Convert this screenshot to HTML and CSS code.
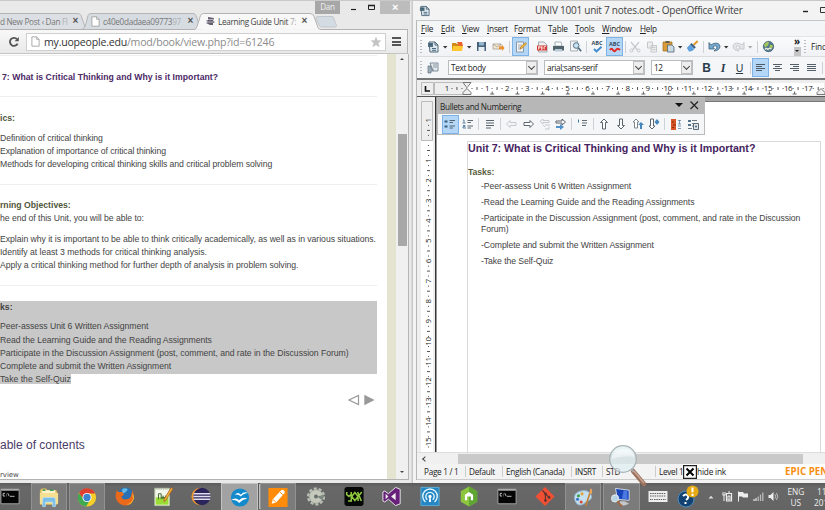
FILE: index.html
```html
<!DOCTYPE html>
<html lang="en">
<head>
<meta charset="utf-8">
<title>Desktop</title>
<link rel="stylesheet" href="styles.css">
</head>
<body>
<svg class="defs" width="0" height="0">
  <defs>
    <symbol id="caret" viewBox="0 0 8 16"><path d="M2 7h4.400L4.200 9.400z" fill="#333"/></symbol>
    <symbol id="doc" viewBox="0 0 10 12"><path d="M1 .8h5.200L9 3.600v7.600H1z" fill="#fff" stroke="#999" stroke-width=".9"/><path d="M6.200.8v2.800H9" fill="none" stroke="#999" stroke-width=".8"/></symbol>
    <symbol id="odt" viewBox="0 0 12 12"><path d="M2 1h6l3 3v7H3z" fill="#dce7ee" stroke="#50687a" stroke-width="1"/><path d="M1 2h5v4H1z" fill="#526f82"/><path d="M2 3.300h3M5 7.500h4M5 9.300h4" stroke="#395a70" stroke-width=".9"/><path d="M8 1v3h3" fill="none" stroke="#50687a"/></symbol>
    <symbol id="cmd" viewBox="0 0 22 22"><path d="M1 3h20v16H1z" fill="#050505" stroke="#aaa"/><path d="M1.500 3h19v1.600h-19z" fill="#bbb"/><path d="M5.500 7.500h-2v3h2M7 8v.7M7 10v.7M8.500 7.300l1.600 3.400M11 10.800h5" stroke="#ddd" fill="none" stroke-width=".9"/></symbol>
  </defs>
</svg>
<main class="desktop">
<div class="windows">
  <section class="browser">
    <header class="tabstrip">
      <svg class="tabshapes" width="412" height="30" viewBox="0 0 412 30">
        <path d="M-2 13.500H78q2 0 3 2l5 14H-2z" fill="#dce0e5" stroke="#b5b5b5"/>
        <path d="M82 29.500q3-1 4-6l2-8q1-2 3-2H193q2 0 3 2l5 14z" fill="#d6dce2" stroke="#b5b5b5"/>
        <path d="M318 16.500h15l3.500 9q0 1.500-1 1.500H322q-2 0-3-2l-3-7q0-1.500 2-1.500z" fill="#d4dce3" stroke="#c2c7cb"/>
        <path d="M0 30v-.5H194q2 0 3-3l3.500-11q1-2 3-2H310q3 0 4 3l4 11q1 2 3 2h87" fill="#f8f8f8" stroke="#b2b2b2"/>
      </svg>
      <div class="tab t1"><span>d New Post ‹ Dan <i>Fl</i></span><b>×</b></div>
      <div class="tab t2"><svg width="9" height="11"><use href="#doc"/></svg><span>c40e0dadaea09773<i>97</i></span><b>×</b></div>
      <div class="tab t3"><svg width="11" height="9" viewBox="0 0 11 9"><path d="M3 0l6 1-1 3 2 1-2 1v2H5L1 6l2-1-2-1 2-1z" fill="#655e6f"/><path d="M3 2.500h5M2 5h6" stroke="#d8d4de" stroke-width=".7"/></svg><span>Learning Guide Unit <i>7:</i></span><b>×</b></div>
      <div class="controls">
        <span class="user">Dan</span>
        <svg width="40" height="14" viewBox="0 0 40 14"><path d="M11 8.500h5" stroke="#222" stroke-width="1.200"/><path d="M28.500 4.500h6v4h-6z" fill="none" stroke="#222"/><path d="M28 4.500h7" stroke="#222" stroke-width="1.600"/></svg>
        <span class="close">×</span>
      </div>
    </header>
    <nav class="urlbar">
      <svg class="reload" width="12" height="12" viewBox="0 0 12 12"><path d="M9.600 7.600A4 4 0 1 1 9 3.200" fill="none" stroke="#555" stroke-width="1.900"/><path d="M6.600 5.200h4.200V.9z" fill="#555"/></svg>
      <div class="omnibox"><svg width="9" height="11"><use href="#doc"/></svg><span><b>my.uopeople.edu</b>/mod/book/view.php?id=61246</span><svg class="star" width="12" height="12" viewBox="0 0 12 12"><path d="M6 .4l1.500 3.900 4.200.2-3.300 2.600 1.200 4.200L6 9 2.400 11.300l1.200-4.200L.3 4.500l4.200-.2z" fill="#c4c4c4"/></svg></div>
      <div class="burger"></div>
    </nav>
    <div class="viewport">
      <article class="page">
        <hr class="h0">
        <h1>7: What is Critical Thinking and Why is it Important?</h1>
        <hr>
        <h2>ics:</h2>
        <ul class="ls-a"><li>Definition of critical thinking</li><li>Explanation of importance of critical thinking</li><li>Methods for developing critical thinking skills and critical problem solving</li></ul>
        <hr>
        <h2 class="tight">rning Objectives:</h2>
        <p>he end of this Unit, you will be able to:</p>
        <ul class="ls-b"><li>Explain why it is important to be able to think critically academically, as well as in various situations.</li><li>Identify at least 3 methods for critical thinking analysis.</li><li>Apply a critical thinking method for further depth of analysis in problem solving.</li></ul>
        <hr>
        <div class="selected"><h2>ks:</h2>
        <ul><li>Peer-assess Unit 6 Written Assignment</li><li>Read the Learning Guide and the Reading Assignments</li><li>Participate in the Discussion Assignment (post, comment, and rate in the Discussion Forum)</li><li>Complete and submit the Written Assignment</li></ul></div>
        <div class="lastline"><mark>Take the Self-Quiz</mark></div>
        <div class="pager"><svg width="28" height="12" viewBox="0 0 28 12"><path d="M10.500 1.500v9L1 6z" fill="#fff" stroke="#999" stroke-width="1.200"/><path d="M16.300.8v10.400L26.500 6z" fill="#999"/></svg></div>
        <h3>able of contents</h3>
        <p class="toc">rview</p>
      </article>
      <div class="stripe"></div>
      <div class="vscroll"><i class="up"></i><div class="thumb"></div><i class="down"></i></div>
    </div>
  </section>

  <section class="writer">
    <header class="titlebar"><svg width="11" height="12"><use href="#odt"/></svg><span>UNIV 1001 unit 7 notes.odt - OpenOffice Writer</span><svg class="wc" width="24" height="14" viewBox="0 0 24 14"><path d="M2 7.500h5" stroke="#222" stroke-width="1.400"/><path d="M19.500 3.500h8v5h-8z" fill="none" stroke="#333"/></svg></header>
    <div class="client">
      <nav class="menu"><span><u>F</u>ile</span><span><u>E</u>dit</span><span><u>V</u>iew</span><span><u>I</u>nsert</span><span>F<u>o</u>rmat</span><span>T<u>a</u>ble</span><span><u>T</u>ools</span><span><u>W</u>indow</span><span><u>H</u>elp</span></nav>
      <div class="bar standard">
        <i class="grip"></i>
        <svg width="12" height="12"><use href="#odt"/></svg>
        <svg width="8" height="16"><use href="#caret"/></svg>
        <svg width="13" height="13" viewBox="0 0 13 13"><path d="M1 3h4l1 1h5v7H1z" fill="#d08a18"/><path d="M2 6h10l-1 5H1z" fill="#ffc832"/><path d="M6 2h5l1 4H8z" fill="#e96230"/></svg>
        <svg width="8" height="16"><use href="#caret"/></svg>
        <svg width="11" height="11" viewBox="0 0 11 11"><path d="M1 1h9v9H1z" fill="#46627a"/><path d="M3 1h5v3.500H3z" fill="#93b5cc"/><path d="M2.500 6h6v4h-6z" fill="#e8eef2"/></svg>
        <svg width="13" height="11" viewBox="0 0 13 11"><path d="M1 3h8v5H1z" fill="#f4ead2" stroke="#a59c90" stroke-width=".8"/><path d="M1 3l4 3 4-3" fill="none" stroke="#a59c90" stroke-width=".8"/><path d="M7 5.500h3V3.800L12.600 7 10 10V8.300H7z" fill="#ee8e2c"/></svg>
        <i class="sep"></i>
        <span class="hl"><svg width="12" height="12" viewBox="0 0 12 12"><path d="M1.500 1h7v10h-7z" fill="#f5f5f5" stroke="#718494" stroke-width=".8"/><path d="M3 4h4M3 6h3M3 8h3" stroke="#8998a3" stroke-width=".8"/><path d="M5 8l1-2.500 4.500-4 1.200 1.200L7.300 7.200z" fill="#f4b83c" stroke="#a9752a" stroke-width=".6"/></svg></span>
        <i></i>
        <svg width="11" height="12" viewBox="0 0 11 12"><path d="M1.500 1H7l3 3v7H1.500z" fill="#eee" stroke="#8d9aa4" stroke-width=".8"/><path d="M0 4.500h10v5H0z" fill="#d43c35"/><path d="M1.500 8.500v-3h1.700v1.500H1.500M4.500 5.500v3c2 0 2-3 0-3M7.300 8.500v-3h1.600" stroke="#fff" fill="none" stroke-width=".7"/></svg>
        <svg width="13" height="12" viewBox="0 0 13 12"><path d="M3 1h6l1 4H3z" fill="#fff" stroke="#8e9da6" stroke-width=".8"/><path d="M1 5h11v4.500H1z" fill="#53636e"/><path d="M3 8h7v2.500H3z" fill="#b6cbd6"/></svg>
        <svg width="13" height="13" viewBox="0 0 13 13"><path d="M1.500 1h7v10h-7z" fill="#f3f3f3" stroke="#94a1ab" stroke-width=".8"/><circle cx="7.200" cy="5.500" r="2.800" fill="#c7e0f2" stroke="#547287"/><path d="M9.300 7.700l2.800 3.600" stroke="#50697b" stroke-width="1.700"/></svg>
        <i class="sep"></i>
        <span class="abc"><em>ABC</em><svg width="11" height="7" viewBox="0 0 11 7"><path d="M2 3l2.500 2.500L9.500.8" fill="none" stroke="#3d8bd0" stroke-width="1.900"/></svg></span>
        <span class="hl abc"><em>ABC</em><svg width="12" height="6" viewBox="0 0 12 6"><path d="M1 3q1.500-2.500 3 0t3 0 4 0" fill="none" stroke="#e02c24" stroke-width="2"/></svg></span>
        <i class="sep"></i>
        <svg width="12" height="12" viewBox="0 0 12 12"><path d="M2 1l6.500 8M10 1L3.500 9" stroke="#c5c9cc" stroke-width="1.200"/><circle cx="2.500" cy="9.500" r="1.500" fill="none" stroke="#c5c9cc"/><circle cx="9.500" cy="9.500" r="1.500" fill="none" stroke="#c5c9cc"/></svg>
        <svg width="12" height="12" viewBox="0 0 12 12"><path d="M1.500 1h5v6h-5zM5 4.500h5.500v6.500H5z" fill="#eee" stroke="#c5c9cc"/><path d="M6.500 6.500h3M6.500 8.500h3" stroke="#c5c9cc"/></svg>
        <svg width="13" height="13" viewBox="0 0 13 13"><path d="M1 2h9v9H1z" fill="#d99c38" stroke="#a06d20" stroke-width=".7"/><path d="M3.500 1h4v2h-4z" fill="#665c4c"/><path d="M5.500 5H10l2 2v5H5.500z" fill="#cbd9e2" stroke="#4c6577" stroke-width=".8"/></svg>
        <svg width="8" height="16"><use href="#caret"/></svg>
        <svg width="13" height="13" viewBox="0 0 13 13"><path d="M11.700 1L7.500 5" stroke="#e39a2c" stroke-width="2"/><path d="M5.500 3l4.300 4.300-1.500 1.500L4 4.500z" fill="#3a5f84"/><path d="M4 4.500L8.300 9Q6 12 3 11.500L.8 8z" fill="#5e9fdd"/></svg>
        <i class="sep"></i>
        <svg width="13" height="12" viewBox="0 0 13 12"><path d="M1 1.500V8h5.500L4.800 6q3.700-2.500 4.200 0 0 1.800-3 4 5.500-.5 6-4.500Q11.500 1 5.500 2.500L3 4z" fill="#76a9cf" stroke="#40617c" stroke-width=".8"/></svg>
        <svg width="8" height="16"><use href="#caret"/></svg>
        <svg width="13" height="12" viewBox="0 0 13 12"><path d="M12 1.500V8H6.500L8.200 6Q4.500 3.500 4 6q0 1.800 3 4-5.500-.5-6-4.500Q1.500 1 7.500 2.500L10 4z" fill="#e5e7e8" stroke="#c0c4c7" stroke-width=".9"/></svg>
        <svg class="dim" width="8" height="16"><use href="#caret"/></svg>
        <i class="sep"></i>
        <svg width="13" height="13" viewBox="0 0 13 13"><circle cx="6.500" cy="6.500" r="5.200" fill="#51788f" stroke="#405e70" stroke-width=".7"/><path d="M2 4.500q3-4 5-2L6 5.500 3 7.500zM8 4.500l3 1-1 3-3 1z" fill="#a5c65b"/><path d="M3 9.500q1-2 3 0 1-2 3.500-.5" fill="none" stroke="#e0e6d8" stroke-width="1.300"/></svg>
        <i></i>
        <span class="more">»</span>
        <i class="grip"></i>
        <span class="find">Find</span>
      </div>
      <div class="bar format">
        <i class="grip"></i>
        <svg width="12" height="12" viewBox="0 0 12 12"><path d="M3 1h8v8H6z" fill="#e3e8eb" stroke="#748592" stroke-width=".9"/><path d="M6 3h4M6 5h4" stroke="#8896a1"/><path d="M1 4h3v3h2v2H4v2H1z" fill="#9fb0bd" stroke="#61717d" stroke-width=".7"/></svg>
        <div class="combo"><span>Text body</span><b></b></div><i></i>
        <div class="combo"><span>arial;sans-serif</span><b></b></div><i></i>
        <div class="combo"><span>12</span><b></b></div><i></i>
        <strong>B</strong><em>I</em><u>U</u><i class="sep"></i>
        <span class="hl"><svg width="9" height="9" viewBox="0 0 9 9"><path d="M0 1.500h9M0 3.500h6M0 5.500h9M0 7.500h6" stroke="#4c5a66"/></svg></span>
        <svg width="9" height="9" viewBox="0 0 9 9"><path d="M0 1.500h9M2 3.500h5M0 5.500h9M2 7.500h5" stroke="#555f68"/></svg>
        <svg width="9" height="9" viewBox="0 0 9 9"><path d="M0 1.500h9M3 3.500h6M0 5.500h9M3 7.500h6" stroke="#555f68"/></svg>
        <svg width="9" height="9" viewBox="0 0 9 9"><path d="M0 1.500h9M0 3.500h9M0 5.500h9M0 7.500h9" stroke="#555f68"/></svg>
        <i class="sep"></i>
      </div>
      <div class="hruler"><svg id="hr" width="408" height="17" viewBox="417 79 408 17"></svg></div>
      <div class="docarea">
        <div class="vruler"><svg id="vr" width="19" height="355" viewBox="417 97 19 355"></svg></div>
        <div class="canvas">
          <div class="palette">
            <div class="ptitle"><span>Bullets and Numbering</span><svg width="30" height="12" viewBox="0 0 30 12"><path d="M1 3h8L5 7z" fill="#111"/><path d="M16.500 1.500l7.500 7.500M24 1.500l-7.500 7.500" stroke="#222" stroke-width="1.200"/></svg></div>
            <div class="pbar">
              <span class="hl"><svg width="12" height="10" viewBox="0 0 12 10"><path d="M5.500 1.500H11M5.500 3.500h3.500M5.500 7H11M5.500 9h3.500" stroke="#516270"/><path d="M.5 1.500h3v2h-3zM.5 6.500h3v2h-3z" fill="#315e82"/></svg></span>
              <svg width="12" height="10" viewBox="0 0 12 10"><path d="M5.500 1.500H11M5.500 3.500h3.500M5.500 7H11M5.500 9h3.500" stroke="#5d6871"/><path d="M1 1h1v3M.5 4h3M1 6.500h2v1.200H1V9h3" stroke="#4c7898" fill="none" stroke-width=".9"/></svg>
              <i class="sep"></i>
              <svg width="10" height="10" viewBox="0 0 10 10"><path d="M1 1.500h8M1 4h8M1 6.500h8M1 9h5" stroke="#59646d" stroke-width="1.200"/></svg>
              <i class="sep"></i>
              <svg width="12" height="10" viewBox="0 0 12 10"><path d="M5 1.500L1.500 5 5 8.500v-2h6v-3H5z" fill="#f4f5f6" stroke="#c5c9cd"/></svg>
              <svg width="12" height="10" viewBox="0 0 12 10"><path d="M7 1.500L10.500 5 7 8.500v-2H1v-3h6z" fill="#fff" stroke="#5c6771"/></svg>
              <svg width="12" height="12" viewBox="0 0 12 12"><path d="M4 1L1 3.500 4 6V4.500h6v-2H4zM6 7h5M6 9l-2-2M6 11h4V8.500" fill="none" stroke="#c5c9cd"/></svg>
              <svg width="12" height="12" viewBox="0 0 12 12"><path d="M7 1l3.500 3L7 7V5H1V3h6z" fill="#fff" stroke="#56616b"/><path d="M1 8h4V6l4 3-4 3v-2H1z" fill="#4f91c9"/></svg>
              <i class="sep"></i>
              <svg width="11" height="10" viewBox="0 0 11 10"><path d="M5 1.500h5M5 4h5M5 6.500h4" stroke="#606b73"/><path d="M1.500.5v3" stroke="#3b78aa"/></svg>
              <i class="sep"></i>
              <svg width="10" height="12" viewBox="0 0 10 12"><path d="M5 1L1.500 4.500h2V11h3V4.500h2z" fill="#fff" stroke="#59646d"/></svg>
              <svg width="10" height="12" viewBox="0 0 10 12"><path d="M5 11L1.500 7.500h2V1h3v6.500h2z" fill="#fff" stroke="#59646d"/></svg>
              <svg width="12" height="12" viewBox="0 0 12 12"><path d="M4 1L1 4h1.500v6h3V4H7z" fill="#fff" stroke="#7c868e"/><path d="M9 4l3 3h-2v4H8V7H6z" fill="#4786ba"/></svg>
              <svg width="12" height="12" viewBox="0 0 12 12"><path d="M4 11L1 8h1.500V1h3v7H7z" fill="#fff" stroke="#59646d"/><path d="M9 1l2.500 3L9 7 6.500 4z" fill="#4786ba"/></svg>
              <i class="sep"></i>
              <svg width="12" height="11" viewBox="0 0 12 11"><path d="M1 0h5v11H1z" fill="#d95528"/><path d="M2 3h2M3 6h3M2 8.500h2" stroke="#82300e"/><path d="M8 1.500h3M9.500 1v4M8 5h3M8 7h3M8 9.500h3" stroke="#5f87a5" stroke-width=".8"/></svg>
              <svg width="12" height="11" viewBox="0 0 12 11"><path d="M1 1h3v2H1zM1 5h3v2H1z" fill="#567288"/><path d="M5 1.500h5M5 4.500h6M5 7h2M1 9.500h4" stroke="#6b7882"/><path d="M6.500 4.500h5v6h-5z" fill="#dde5ea" stroke="#5c6b78"/><circle cx="9" cy="7.500" r="1" fill="#526577"/></svg>
            </div>
          </div>
          <article class="sheet">
            <h1>Unit 7: What is Critical Thinking and Why is it Important?</h1>
            <h2>Tasks:</h2>
            <ul><li>-Peer-assess Unit 6 Written Assignment</li><li>-Read the Learning Guide and the Reading Assignments</li><li class="two">-Participate in the Discussion Assignment (post, comment, and rate in the Discussion<br>Forum)</li><li>-Complete and submit the Written Assignment</li><li>-Take the Self-Quiz</li></ul>
          </article>
        </div>
      </div>
      <div class="hscroll"><b></b><div></div></div>
      <footer class="status"><span>Page 1 / 1</span><span>Default</span><span>English (Canada)</span><span>INSRT</span><span>STD</span><span>Level 1</span>
        <div class="ink"><svg width="14" height="14" viewBox="0 0 14 14"><path d="M.6.6h12.800v12.800H.6z" fill="#fff" stroke="#222" stroke-width="1.200"/><path d="M3.500 3.500l7 7M10.500 3.500l-7 7" stroke="#000" stroke-width="2"/></svg><em>hide ink</em><strong>EPIC PEN</strong></div>
      </footer>
    </div>
  </section>
</div>

<footer class="taskbar">
  <div class="task"><svg class="ic"><use href="#cmd"/></svg></div>
  <div class="task open"><svg class="ic" viewBox="0 0 22 22"><path d="M1 3l2-2h5l1 2h10l1 2v14H1z" fill="#dfbd59"/><path d="M3 3h15v6H3z" fill="#faf3ce"/><path d="M4 3h3M12 3h4" stroke="#38a25a" stroke-width="1.500"/><path d="M1 6h20v12H1z" fill="#f5df91"/><path d="M4 21v-8q0-2 2-2h10q2 0 2 2v8h-3v-5H7v5z" fill="#79bfe9" stroke="#b9e0f5" stroke-width=".8"/></svg></div>
  <div class="task open"><svg class="ic" viewBox="0 0 22 22"><circle cx="11" cy="11" r="10" fill="#f5cf27"/><path d="M2.300 6A10 10 0 0 1 20 6.500H11L7 13z" fill="#df3e30"/><path d="M2.300 6A10 10 0 0 0 10 21l4.500-7.500L7 13z" fill="#3faa4f"/><circle cx="11" cy="11" r="5" fill="#fff"/><circle cx="11" cy="11" r="4" fill="#3e83d0"/></svg></div>
  <div class="task"><svg class="ic" viewBox="0 0 22 22"><circle cx="11.500" cy="10" r="9" fill="#2970b5"/><path d="M8 3q3-2 6 0l-2 3-4 2z" fill="#65bce7"/><path d="M2 4l2 2 4 0 2 3-3 2q1 4 5 3 5 0 6-5l1-5q3 6 1 11-3 6-9 6Q3 20 1 13 0 9 2 4z" fill="#ea691b"/><path d="M19 8q3 9-6 12 5 0 7-5 2-4-1-7z" fill="#ffc02d"/></svg></div>
  <div class="task"><svg class="ic" viewBox="0 0 22 22"><path d="M2 2h16v19H2z" fill="#f3f6ea" stroke="#b5c9a3"/><path d="M3 12h14v8H3z" fill="#9bdc35"/><path d="M3 3h14" stroke="#aaa" stroke-dasharray="1 1"/><path d="M6 14V8h3v6M11 10v4M9.500 12h3M14 10v4M12.500 12h3" stroke="#345b27" fill="none"/><path d="M20 1l2 1.500-8 13-2 1 .2-2.500z" fill="#edb22f" stroke="#a34b26" stroke-width=".7"/></svg></div>
  <div class="task"><svg class="ic" viewBox="0 0 22 22"><circle cx="10" cy="11" r="9.500" fill="#f3982c"/><circle cx="12" cy="11" r="9.500" fill="#2c255b"/><path d="M3 8h18M2.500 11h19M3 14h18" stroke="#e1dff0" stroke-width="1.500"/></svg></div>
  <div class="task open active"><svg class="ic" viewBox="0 0 22 22"><circle cx="11" cy="11" r="10" fill="#128acb"/><path d="M5 8q4-4 7 0 3-4 8-2-5 0-8 4-3-3-7-2zM1 14q5-4 9 0 4-4 9-2-5 1-9 5-3-4-9-3z" fill="#fff"/></svg></div>
  <div class="task open"><svg class="ic" viewBox="0 0 22 22"><path d="M.5.500h21v21H.5z" fill="#ff8b0b"/><path d="M4 18l1.300-5L14.500 3q1.500-1 3 .3t.5 3L9 16.500z" fill="#fff"/><path d="M13 5l3.700 3.200M5.300 13L9 16.500" stroke="#ff8b0b"/></svg></div>
  <div class="task"><svg class="ic" viewBox="0 0 22 22"><circle cx="11" cy="11" r="8.500" fill="none" stroke="#b9bfb4" stroke-width="3" stroke-dasharray="3.300 2.040"/><circle cx="11" cy="11" r="7.500" fill="#c4c9bb" stroke="#a2a99f"/><circle cx="11" cy="11" r="2.200" fill="#68706d"/><path d="M12 11l8-2-2 6z" fill="#7d8680"/></svg></div>
  <div class="task"><svg class="ic" viewBox="0 0 22 22"><rect x=".5" y=".5" width="21" height="21" rx="3" fill="#050805"/><path d="M3 6v3l2.500 2L8 8.500V6M8 9v7H4.500M12 6.500L15.500 11 12 15.500 8.500 11zM15 6l4 10M19.500 6l-3 4M15.500 12v4" fill="none" stroke="#90c83f" stroke-width="1.700"/></svg></div>
  <div class="task"><svg class="ic" viewBox="0 0 22 22"><path d="M15 1l5 2v16l-5 2-8-7-4 3-2-1V6l2-1 4 3z" fill="#68217a" stroke="#eee"/><path d="M4 8v6l3-3zM10 11l5-4v8z" fill="#eee"/></svg></div>
  <div class="task"><svg class="ic" viewBox="0 0 22 22"><path d="M1 1h20v20H1z" fill="#2486c3" stroke="#5eafd9"/><path d="M6 17a8 8 0 1 1 10 0M8 14.500a4.600 4.600 0 1 1 6 0" fill="none" stroke="#e4f6ff" stroke-width="1.500"/><circle cx="11" cy="11" r="1.800" fill="#fff"/><path d="M10.300 12h1.400l.5 5H9.800z" fill="#fff"/></svg></div>
  <div class="task"><svg class="ic" viewBox="0 0 22 22"><path d="M11 0l9 5.300v11.400L11 22l-9-5.300V5.300z" fill="#8cc63f"/><path d="M11 0l9 5.300v11.400L11 22z" fill="#5fa532"/><path d="M6.500 15V9L11 6l4.500 3v6H13v-4H9v4z" fill="#fff"/></svg></div>
  <div class="task"><svg class="ic"><use href="#cmd"/></svg></div>
  <div class="task"><svg class="ic" viewBox="0 0 22 22"><path d="M11 .500L21.500 11 11 21.500.5 11z" fill="#ef5034"/><path d="M8 4l3.500 4v8M11.500 8l4 4" fill="none" stroke="#5a3430" stroke-width="1.300"/><circle cx="11.500" cy="8" r="1.500" fill="#5a3430"/><circle cx="11.500" cy="15.500" r="1.500" fill="#5a3430"/><circle cx="15.500" cy="12" r="1.500" fill="#5a3430"/></svg></div>
  <div class="task open"><svg class="ic" viewBox="0 0 22 22"><path d="M2 14Q0 6 8 4t11 3q4 5-3 8-3 1-4 3-7 4-10-4z" fill="#c5dff0" stroke="#8eb7d4"/><circle cx="6" cy="9" r="1.700" fill="#3d9e45"/><circle cx="10" cy="7" r="1.700" fill="#e5a732"/><circle cx="5" cy="13" r="1.700" fill="#3a72c2"/><circle cx="9" cy="16" r="1.700" fill="#d34a38"/><path d="M19 5l-5 15" stroke="#c58335" stroke-width="1.800"/><path d="M18 7l1-6 2 1v5z" fill="#e9a45c"/></svg></div>
  <div class="task open"><svg class="ic" viewBox="0 0 22 22"><path d="M5 1l15 2v11L7 13z" fill="#1744b8" stroke="#d7dfe9"/><path d="M14 3l4 .5V13l-6-1z" fill="#4c78e2"/><path d="M10 15h5l5 3-6 2-5-2z" fill="#c3c7c9"/><circle cx="4.500" cy="12" r="4" fill="#b8d5e5" stroke="#eee"/><path d="M7 15l5 6" stroke="#a66a43" stroke-width="2"/></svg></div>
  <div class="tray">
    <svg width="20" height="13" viewBox="0 0 20 13"><path d="M.5 1h19v11H.5z" fill="#eee"/><path d="M2 3.500h16M2 6h16M2 9.500h3M6 9.500h8M15 9.500h3" stroke="#5c5c5c" stroke-width="1.200" stroke-dasharray="1.500 .8"/></svg>
    <svg width="22" height="23" viewBox="0 0 22 23"><circle cx="9" cy="14" r="8" fill="#134272" stroke="#4f8dbd"/><path d="M6 11q3-3 5 0 1 2-2 4M8.500 17v2" fill="none" stroke="#fff" stroke-width="2"/><circle cx="15.500" cy="6.500" r="6" fill="#e6aa13"/><path d="M15.500 2.500v4.800M15.500 8.800V11" stroke="#fff" stroke-width="2"/></svg>
    <svg width="6" height="4" viewBox="0 0 6 4"><path d="M.5 3.500h5L3 .8z" fill="#ddd"/></svg>
    <svg width="11" height="11" viewBox="0 0 11 11"><path d="M4.500 2.500h5v7.500h-5z" fill="none" stroke="#eee" stroke-width="1.200"/><path d="M6 1h2M6 5h2v4H6zM.5 4h3M1 1v3M3 1v3M2 4v6" fill="none" stroke="#eee"/></svg>
    <svg width="12" height="11" viewBox="0 0 12 11"><path d="M1.500.500v10" stroke="#eee"/><path d="M2 1h4l1 1.500h4v4H6L5 5.500H2z" fill="#eee"/></svg>
    <svg width="11" height="9" viewBox="0 0 11 9"><path d="M1 7v2M3 6v3" stroke="#ddd" stroke-width="1.300"/><path d="M5.200 4.500V9M7.500 2.500V9M9.800.500V9" stroke="#bbb" stroke-width="1.300"/></svg>
    <svg width="11" height="11" viewBox="0 0 11 11"><path d="M.5 4h2L5.500 1v9l-3-3h-2z" fill="#eee"/><path d="M7 3.500q1.500 2 0 4M8.500 2q2.500 3.500 0 7" fill="none" stroke="#ccc" stroke-width=".9"/></svg>
    <div class="two-line">ENG<br>US</div>
    <div class="two-line clock"><span>11:</span><br>201</div>
  </div>
</footer>
<svg class="magnifier" width="56" height="56" viewBox="0 0 56 56"><path d="M30 29l11 13" stroke="#9c715c" stroke-width="4.500" stroke-linecap="round"/><path d="M31 29l10 12" stroke="#c7a594" stroke-width="1.500"/><path d="M28 27l3 3" stroke="#aaa" stroke-width="2"/><circle cx="20" cy="17" r="13.300" fill="#dfeef2" fill-opacity=".72" stroke="#a9b2b5" stroke-width="1.300"/><path d="M8.500 17q2-10 12-10 9 0 11 8-11-2-23 2z" fill="#fff" opacity=".5"/></svg>
</main>
<script src="rulers.js"></script>
</body>
</html>
```
FILE: styles.css
```css
* { box-sizing: border-box; }
body { margin: 0; width: 825px; height: 510px; overflow: hidden; font-family: "Open Sans", "Noto Sans", sans-serif; font-size: 8.200px; letter-spacing: -.32px; color: #222; }
.defs { display: block; height: 0; }
svg { display: block; flex: none; overflow: hidden; }
h1, h2, h3, p, ul { margin: 0; padding: 0; }
ul { list-style: none; }
.desktop { position: relative; height: 510px; overflow: hidden; }
.windows { display: flex; height: 483px; }

/* Browser */
.browser { width: 412px; flex: none; background: #e9e9e9; border-top: 1px solid #c9c9c9; border-right: 1px solid #d8d8d8; overflow: hidden; }
.tabstrip { position: relative; height: 29px; display: flex; align-items: flex-end; }
.tabshapes { position: absolute; left: 0; top: -1px; }
.tab { position: relative; height: 16px; padding-bottom: 2px; display: flex; align-items: center; color: #777; white-space: nowrap; }
.tab span { margin-right: auto; }
.tab i { font-style: normal; opacity: .45; }
.tab b { font: bold 10px/10px "Liberation Sans", sans-serif; color: #555; }
.t1 { width: 78px; }
.t2 { width: 115px; padding-left: 13px; gap: 3px; }
.t3 { width: 114px; padding-left: 12px; gap: 2px; color: #444; }
.controls { position: relative; align-self: flex-start; margin-left: 8px; display: flex; }
.user { width: 25px; height: 13px; background: #a7a7a7; color: #eee; line-height: 12px; text-align: center; }
.close { width: 30px; height: 13px; background: #bcbcbc; color: #fff; font: bold 11px/12px "Liberation Sans", sans-serif; text-align: center; }
.urlbar { height: 24px; display: flex; align-items: center; width: 408px; background: linear-gradient(#f8f8f8, #e9e9e9); border-right: 1px solid #b5b5b5; border-bottom: 1px solid #c4c4c4; }
.reload { margin-left: 8px; }
.omnibox { margin: 0 0 0 6px; width: 360px; height: 18px; border: 1px solid #cfcfcf; background: #fff; display: flex; align-items: center; padding: 0 3px 0 4px; font-size: 10.600px; color: #8b8b8b; line-height: 16px; }
.omnibox span { margin-left: 4px; margin-right: auto; letter-spacing: -.23px; }
.omnibox b { font-weight: normal; color: #333; }
.burger { width: 9px; height: 9px; margin-left: 6px; border-top: 2px solid #555; border-bottom: 2px solid #555; background: linear-gradient(transparent 1.500px, #555 1.500px 3.500px, transparent 3.500px); }
.viewport { height: 426px; width: 409px; display: flex; background: #fff; border-right: 1px solid #b5b5b5; border-bottom: 1px solid #b2b2b2; }
.page { width: 387px; height: 425px; overflow: hidden; font: 8.670px/13.330px "Liberation Sans", Arial, sans-serif; letter-spacing: -.045px; color: #444; white-space: nowrap; }
.page hr { border: 0; height: 1px; width: 377px; margin: 0; background: #efefef; }
.page .h0 { margin: 1px 0 13.600px; }
.page h1 { font-size: 8.670px; line-height: 14px; padding-left: 2px; letter-spacing: .03px; color: #4b2865; margin-bottom: 12.800px; }
.page h2 { font-size: 8.670px; line-height: 13.300px; letter-spacing: 0; color: #50573a; margin: 14.200px 0 6.100px; }
.page h2.tight { margin-bottom: 0; }
.page ul { height: 40px; margin-bottom: 13px; padding-top: .7px; }
.page p + ul { margin-top: 6.200px; }
.page .ls-a { letter-spacing: -.065px; }
.page .ls-b { letter-spacing: -.033px; }
.page .selected { width: 377px; height: 73.500px; margin-top: 15px; background: #c8c8c8; overflow: hidden; }
.page .selected h2 { margin: 0 0 5.500px; color: #444; }
.page .lastline { height: 13.300px; line-height: 10px; }
.page mark { display: inline-block; height: 10px; background: #c8c8c8; color: inherit; letter-spacing: 0; }
.pager { padding: 6px 0 0 348px; }
.page h3 { font: 12px/16px "Liberation Sans", sans-serif; letter-spacing: 0; color: #4b3b67; margin: 31px 0 15px; }
.page .toc { font: 7px/14px "DejaVu Sans", sans-serif; }
.stripe { width: 9px; background: #e4e4d0; }
.vscroll { width: 12px; background: #f0f0f0; display: flex; flex-direction: column; align-items: center; }
.vscroll i { border: 2.500px solid transparent; }
.vscroll .up { border-bottom-color: #444; border-top: 0; margin-top: 4px; }
.vscroll .down { border-top-color: #444; border-bottom: 0; margin: auto 0 6px; }
.thumb { width: 9px; height: 112px; margin-top: 74px; background: #a8a8a8; }

/* Writer */
.writer { flex: 1; min-width: 0; background: #f3f3f3; border: solid #c9c9c9; border-width: 1px 0 0 1px; padding-left: 4px; overflow: hidden; }
.titlebar { height: 19px; display: flex; align-items: center; padding-left: 2px; font-size: 10px; letter-spacing: -.24px; color: #444; white-space: nowrap; }
.titlebar span { margin-left: 105px; width: 260px; line-height: 16px; padding-bottom: 2px; }
.wc { margin-left: 6px; }
.client { border-left: 1px solid #b7b7b7; border-top: 1px solid #c6c6c6; width: 420px; background: #f4f5f7; margin-left: -1px; }
.menu { display: grid; grid-template-columns: 20px 21px 25px 27px 34px 27px 27px 38px 40px; padding-left: 4px; height: 16px; line-height: 15px; letter-spacing: -.2px; white-space: nowrap; border-bottom: 1px solid #e3e4e6; }
.menu u { text-underline-offset: 1px; text-decoration-thickness: 1px; }
.bar { display: grid; align-items: center; justify-items: center; height: 20px; border-bottom: 1px solid #dadcde; white-space: nowrap; }
.standard { grid-template-columns: 8px 16px 8px 16px 8px 16px 18px 5px 17px 5px 16px 16px 18px 4px 18px 17px 4px 16px 17px 16px 8px 17px 5px 16px 8px 16px 8px 6px 16px 17px 8px 8px 24px; background: linear-gradient(#fafbfc, #f0f2f5); }
.format { grid-template-columns: 8px 16px 7px 90px 6px 101px 6px 42px 5px 17px 16px 17px 4px 17px 17px 17px 16px 6px; height: 21px; background: #f5f6f8; border-bottom: 0; }
.format .combo:nth-child(3) { grid-column: 4; }
.grip { width: 2px; height: 13px; background: repeating-linear-gradient(#bbb 0 1px, transparent 1px 3px); }
.sep { width: 1px; height: 12px; background: #cfd2d5; }
.hl { width: 17px; height: 19px; display: flex; align-items: center; justify-content: center; background: #b5d7f7; border: 1px solid #7fb2e5; }
.abc { display: flex; flex-direction: column; align-items: center; justify-content: center; }
.abc em { font: bold 5.500px/6px "Open Sans", sans-serif; letter-spacing: 0; color: #31495c; }
.dim { opacity: .4; }
.more { width: 7px; height: 18px; background: linear-gradient(#f4f5f7 50%, #c5c5c5 50%); font: bold 10px/7px "Open Sans", sans-serif; text-align: center; }
.more::after { content: ""; display: block; margin: 5px auto 0; width: 0; border: 2px solid transparent; border-top-color: #222; border-bottom: 0; }
.find { justify-self: start; padding-left: 2px; letter-spacing: -.1px; }
.combo { width: 100%; height: 15px; background: #fff; border: 1px solid #b9bcc0; display: flex; align-items: center; justify-content: space-between; padding-left: 2px; }
.combo b { width: 11px; height: 13px; background: #eee; border: 1px solid #c0c0c0; display: flex; align-items: center; justify-content: center; }
.combo b::after { content: ""; width: 4px; height: 4px; border: solid #444; border-width: 0 1.200px 1.200px 0; transform: translateY(-1px) rotate(45deg); }
.format strong { font: bold 12px/14px "Liberation Sans", sans-serif; color: #2c3c4b; }
.format em { font: italic bold 12px/14px "Liberation Serif", serif; color: #2c3c4b; }
.format u { font: 10.500px/12px "Liberation Sans", sans-serif; color: #2c3c4b; }
.hruler { height: 19px; border-top: 2px solid #777; border-bottom: 1px solid #555; background: #eee; }
.docarea { height: 355px; display: flex; }
.vruler { width: 19px; background: #efefef; border-right: 1px solid #333; }
.canvas { flex: 1; min-width: 0; background: #fff; border-left: 1px solid #999; position: relative; }
.canvas::before { content: ""; display: block; height: 4px; background: #a3a3a3; border-bottom: 1px solid #777; }
.palette { position: absolute; z-index: 2; left: 0; top: 0; width: 268px; height: 38px; border: 1px solid #bbb; background: #f5f6f8; }
.ptitle { height: 16px; background: #b7b7b7; display: flex; align-items: center; justify-content: space-between; padding: 0 0 0 2px; color: #222; }
.pbar { height: 20px; display: grid; align-items: center; justify-items: center; padding-left: 3px; grid-template-columns: 18px 17px 5px 17px 4px 18px 17px 16px 16px 5px 17px 5px 16px 17px 17px 16px 5px 17px 17px; }
.sheet { margin: 39px 0 0 30px; width: 354px; height: 312px; border: 1px solid #d9d9d9; border-bottom: 0; font: 8.670px/11px "Liberation Sans", sans-serif; letter-spacing: -.07px; color: #444; white-space: nowrap; }
.sheet h1 { font-size: 10.700px; line-height: 12px; letter-spacing: -.02px; color: #471e61; }
.sheet h2 { font-size: 8.670px; line-height: 12px; color: #5a5e3c; margin-top: 12px; }
.sheet ul { padding: 3px 0 0 13px; }
.sheet li { height: 16px; }
.sheet li.two { height: 26.500px; line-height: 10.500px; }
.hscroll { height: 12px; background: #f0f0f0; display: flex; align-items: center; border-top: 1px solid #ddd; }
.hscroll b { margin: 0 31px 0 6px; width: 4px; height: 4px; border: solid #444; border-width: 0 0 1.200px 1.200px; transform: rotate(45deg); }
.hscroll div { width: 345px; height: 10px; background: #c9c9c9; }
.status { height: 16px; display: grid; grid-template-columns: 48px 37px 69px 31px 53px 28px 1fr; line-height: 15px; background: #f3f3f3; white-space: nowrap; border-bottom: 1px solid #ccc; letter-spacing: -.28px; }
.status > span { padding-left: 3px; border-left: 1px solid #ccc; height: 11px; line-height: 11px; margin-top: 2px; }
.status > span:first-child { border: 0; padding-left: 7px; }
.ink { display: flex; align-items: center; background: #fff; font-size: 8.300px; }
.ink em { font-style: normal; letter-spacing: -.2px; }
.ink strong { color: #f78e12; font-size: 9.800px; margin-left: 59px; letter-spacing: 0; }

/* Taskbar */
.taskbar { height: 27px; background: linear-gradient(#5b5b5b, #686868 4px, #646464); display: flex; }
.task { width: 36.200px; margin-right: 2px; flex: none; display: flex; align-items: center; justify-content: center; }
.task:first-child { margin-left: -7.700px; }
.open { background: #7b7b7b; border: 1px solid #929292; border-bottom: 0; }
.active { background: #a2a2a2; border-color: #c3c3c3; box-shadow: 2px 0 0 -1px #5a5a5a, 3px 0 0 -1px #c0c0c0; }
.ic { width: 20px; height: 21px; }
.tray { display: flex; align-items: center; color: #eee; margin-left: 6px; }
.tray > svg:nth-child(2) { margin: 0 9px; }
.tray > svg:nth-child(4) { margin: 0 4px 0 8px; }
.tray > svg:nth-child(6) { margin: 0 4px 0 4px; }
.two-line { font-size: 8.300px; line-height: 11px; text-align: center; margin-left: 9px; letter-spacing: -.1px; }
.clock { text-align: left; margin-left: 10px; white-space: nowrap; }
.clock span { padding-left: 3px; }
.magnifier { position: absolute; left: 603px; top: 442px; }
.ruler-text { font: 7.900px "Open Sans", sans-serif; letter-spacing: -.3px; fill: #222; text-anchor: middle; }
```
FILE: rulers.js
```js
// Draws the centimetre scales of the two rulers.
const ns = "http://www.w3.org/2000/svg";
function add(parent, tag, attrs, text) {
  const el = document.createElementNS(ns, tag);
  for (const k in attrs) el.setAttribute(k, attrs[k]);
  if (text) el.textContent = text;
  parent.appendChild(el);
}
const h = document.getElementById("hr");
add(h, "path", { d: "M434 82h390v12H434z", fill: "#fff" });
add(h, "path", { d: "M434.500 81.500h32v12h-32zM421.500 81.500h12v12h-12z", fill: "#eee", stroke: "#bbb" });
add(h, "path", { d: "M425.500 85v5h4.500", fill: "none", stroke: "#111", "stroke-width": 1.6 });
for (let i = -1; i < 18; i++) {
  const x = 467 + i * 20.07;
  if (i !== 0) add(h, "text", { x, y: 90, class: "ruler-text" }, String(Math.abs(i)));
  [5, 10, 15].forEach(o => add(h, "path", { d: `M${x + o} ${o === 10 ? 86 : 87}v${o === 10 ? 3 : 1}`, stroke: "#555" }));
}
for (let i = 1; i < 14; i++) {
  const x = 467 + i * 25.2;
  add(h, "path", { d: `M${x} 90.500v2.500M${x - 2} 93h4`, stroke: "#555", "stroke-width": 0.9 });
}
["M463 81.500h8l-3 4-1 1-1-1zM463 93.500v-2l4-4 4 4v2z", "M817 93.500v-2l4-4 4 4v2z"].forEach(d =>
  add(h, "path", { d, fill: "#eee", stroke: "#777" }));

const v = document.getElementById("vr");
add(v, "path", { d: "M421 140h12v312h-12z", fill: "#fff" });
add(v, "path", { d: "M421.500 101.500h11v39h-11z", fill: "#eee", stroke: "#bbb" });
for (let i = -1; i < 16; i++) {
  const y = 140.500 + i * 20.1;
  if (i !== 0) add(v, "text", { transform: `translate(431 ${y}) rotate(-90)`, class: "ruler-text" }, String(Math.abs(i)));
  [5, 10, 15].forEach(o => {
    if (y + o < 450) add(v, "path", { d: `M${o === 10 ? 427 : 428} ${y + o}h${o === 10 ? 3 : 1}`, stroke: "#555" });
  });
}
```
